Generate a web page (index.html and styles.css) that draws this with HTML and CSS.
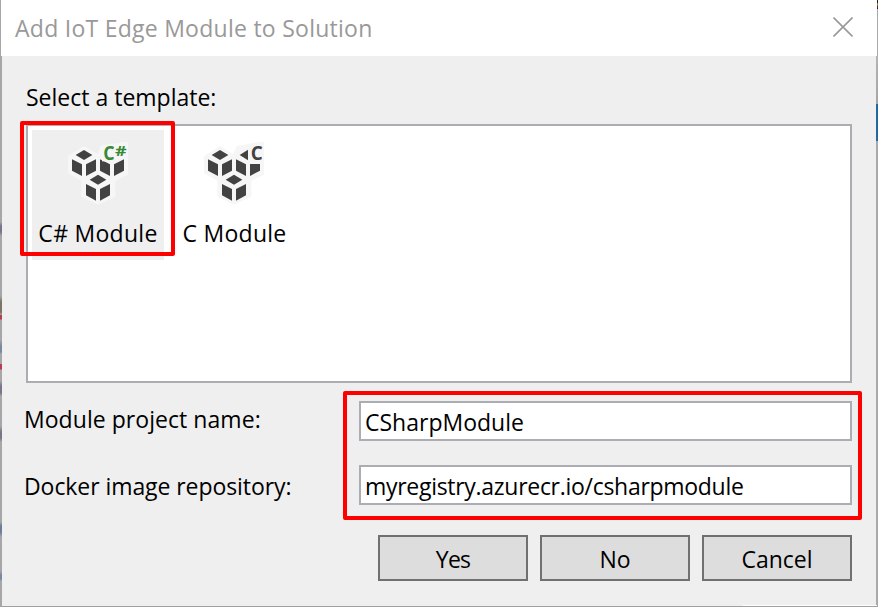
FILE: index.html
```html
<!DOCTYPE html>
<html lang="en">
<head>
<meta charset="utf-8">
<title>Add IoT Edge Module to Solution</title>
<link rel="stylesheet" href="styles.css">
</head>
<body>
<svg class="defs" width="0" height="0">
  <defs>
    <g id="faces">
      <path d="M36 58L66 73V108L36 92ZM108 58L78 73V108L108 92Z"/>
    </g>
    <path id="lid" d="M47 45L72 30L97 45L72 60Z"/>
    <path id="halo" d="M72 18L112 42L122 18L190 6H204V62V104L166 122V170L114 194L64 170V122L24 100V48Z"/>
  </defs>
</svg>
<div class="window">
  <header class="titlebar">
    <h1 class="title">Add IoT Edge Module to Solution</h1>
    <svg class="close" viewBox="0 0 20 20"><path d="M.5 .5L19.500 19.500M19.500 .5L.5 19.500"/></svg>
  </header>
  <main class="content">
    <div class="heading"><span class="t-select">Select a template:</span></div>
    <div class="templates">
      <div class="template selected">
        <svg class="icon" viewBox="0 0 240 195">
          <use href="#halo" class="halo"/>
          <use href="#lid"/><use href="#faces"/>
          <use href="#faces" x="84"/>
          <use href="#lid" x="42" y="74"/><use href="#faces" x="42" y="74"/>
          <path class="gap" d="M126 14H166V64H126Z"/>
          <text class="lang green" x="130" y="59" font-size="56" textLength="34" lengthAdjust="spacingAndGlyphs">C</text>
          <text class="lang green" x="165" y="47" font-size="40" textLength="35" lengthAdjust="spacingAndGlyphs">#</text>
        </svg>
        <span class="t-csharp">C# Module</span>
      </div>
      <div class="template">
        <svg class="icon" viewBox="0 0 240 195">
          <use href="#halo" class="halo"/>
          <use href="#lid"/><use href="#faces"/>
          <use href="#faces" x="84"/>
          <path d="M131 45L156 29V61Z"/>
          <use href="#lid" x="42" y="74"/><use href="#faces" x="42" y="74"/>
          <path class="gap" d="M160 14H204V72H160Z"/>
          <text class="lang" x="164" y="59" font-size="56" textLength="36" lengthAdjust="spacingAndGlyphs">C</text>
        </svg>
        <span class="t-c">C Module</span>
      </div>
    </div>
    <div class="form">
      <label class="label"><span class="t-name">Module project name:</span></label>
      <div class="field"><span class="t-value">CSharpModule</span></div>
      <label class="label"><span class="t-repo">Docker image repository:</span></label>
      <div class="field"><span class="t-url">myregistry.azurecr.io/csharpmodule</span></div>
    </div>
    <div class="actions">
      <div class="button"><span class="t-yes">Yes</span></div>
      <div class="button"><span class="t-no">No</span></div>
      <div class="button"><span class="t-cancel">Cancel</span></div>
    </div>
  </main>
  <div class="mark mark-template"></div>
  <div class="mark mark-fields"></div>
  <div class="edge edge-left"></div>
  <div class="edge edge-right"></div>
  <div class="edge edge-corner"></div>
  <div class="edge edge-bottom"></div>
</div>
</body>
</html>
```
FILE: styles.css
```css
* { box-sizing: border-box; }
body { margin: 0; overflow: hidden; background: #efefef; }
.defs { position: absolute; }
.window {
  position: relative;
  width: 878px;
  height: 607px;
  border-left: 1px solid #a7a7a9;
  border-right: 1px solid #a9a9a9;
  border-bottom: 1px solid #a0a0a0;
  background: #efefef;
  color: #000;
  font: 23px/32px "Open Sans", "Noto Sans", sans-serif;
  white-space: nowrap;
}
.titlebar {
  display: flex;
  justify-content: space-between;
  height: 56px;
  padding: 12px 24px 0 14px;
  background: #fff;
}
.title { margin: 0; font-size: 23px; font-weight: 400; color: #999; letter-spacing: 0.26px; }
.close { width: 20px; height: 20px; margin-top: 5px; fill: none; stroke: #999; stroke-width: 1.6; }
.content { padding: 25px 25px 0; }
.heading { height: 43px; }
.templates {
  display: flex;
  align-items: flex-start;
  gap: 12px;
  height: 259px;
  padding: 4px;
  border: 2px solid #abadb3;
  background: #fff;
}
.template {
  display: flex;
  flex-direction: column;
  align-items: center;
  width: 117px;
  height: 130px;
  padding-top: 10px;
}
.template.selected { width: 132px; background: #efefef; }
.template span { margin-top: 12px; letter-spacing: 0.28px; }
.icon { width: 80px; height: 65px; fill: #424242; flex: none; margin-left: 4px; }
.template:not(.selected) .icon { margin-left: 3px; }
.halo, .gap { fill: #f6f6f6; }
.lang { font-family: "Open Sans", sans-serif; font-weight: 700; }
.green { fill: #388a34; }
.form {
  display: grid;
  grid-template-columns: 333px 493px;
  row-gap: 24px;
  margin-top: 18px;
}
.label { padding-top: 2px; margin-left: -2px; }
.form .label:nth-of-type(2) { padding-top: 5px; }
.field { height: 40px; padding: 3px 4px; border: 2px solid #abadb3; background: #fff; }
.t-name { letter-spacing: 0.05px; }
.t-repo { letter-spacing: -0.07px; }
.t-url { letter-spacing: -0.29px; }
.t-yes { letter-spacing: -0.8px; }
.actions { display: flex; justify-content: flex-end; gap: 12px; margin-top: 30px; }
.button {
  width: 150px;
  height: 46px;
  padding-top: 6px;
  border: 2px solid #707070;
  background: #ddd;
  text-align: center;
}
.mark { position: absolute; border: 4px solid #f00; border-radius: 2px; }
.mark-template { left: 19.400px; top: 121.400px; width: 155px; height: 135px; }
.mark-fields { left: 342.400px; top: 391.400px; width: 519px; height: 129px; }
.edge { position: absolute; }
.edge-left {
  left: -1px; top: 56px; width: 2px; height: 550px;
  background: linear-gradient(#a7a7a9 0 166px, #777789 170px 176px, #a7a7a9 180px 240px, #7d7467 246px 256px, #a7a7a9 259px 258px, #b83b54 258px 263px, #a7a7a9 264px 284px, #7b899f 290px 296px, #a7a7a9 298px 308px, #b83b54 308px 313px, #a7a7a9 314px 325px, #777789 330px 337px, #a7a7a9 340px 370px, #777789 376px 382px, #a7a7a9 386px 466px, #6f7c9b 470px 476px, #a7a7a9 481px 515px, #7b899f 519px 523px, #a7a7a9 525px);
}
.edge-right {
  left: 875px; top: 56px; width: 2px; height: 550px;
  background: linear-gradient(#b4b4b4 0, #a5a5a5 48px, #24699d 48px 85px, #a9a9a9 85px);
}
.edge-corner { left: 876px; top: 0; width: 1px; height: 9px; background: linear-gradient(#202030 0 3px, #e6a13d 4px, #8c3310 6px, #101a40); }
.edge-bottom { left: 742px; top: 605px; width: 134px; height: 1px; background: #fff; }
```
